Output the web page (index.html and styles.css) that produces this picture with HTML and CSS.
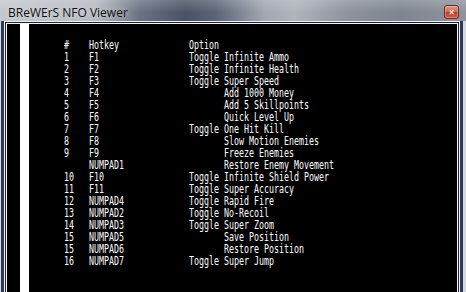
FILE: index.html
```html
<!DOCTYPE html>
<html lang="en">
<head>
    <meta charset="UTF-8">
    <title>BReWErS NFO Viewer</title>
    <link rel="stylesheet" href="styles.css">
</head>
<body>
    <div class="window">
        <div class="titlebar">
            <span class="title">BReWErS NFO Viewer</span>
            <span class="close-btn">&#x2715;</span>
        </div>
        <div class="body">
            <div class="frame">
                <div class="client">
                    <div class="gutter"></div>
                    <div class="strip"></div>
                    <div class="nfo">
<pre class="nfo-text">#    Hotkey              Option
1    F1                  Toggle Infinite Ammo
2    F2                  Toggle Infinite Health
3    F3                  Toggle Super Speed
4    F4                         Add 1000 Money
5    F5                         Add 5 Skillpoints
6    F6                         Quick Level Up
7    F7                  Toggle One Hit Kill
8    F8                         Slow Motion Enemies
9    F9                         Freeze Enemies
     NUMPAD1                    Restore Enemy Movement
10   F10                 Toggle Infinite Shield Power
11   F11                 Toggle Super Accuracy
12   NUMPAD4             Toggle Rapid Fire
13   NUMPAD2             Toggle No-Recoil
14   NUMPAD3             Toggle Super Zoom
15   NUMPAD5                    Save Position
15   NUMPAD6                    Restore Position
16   NUMPAD7             Toggle Super Jump</pre>
                    </div>
                </div>
            </div>
        </div>
    </div>
</body>
</html>
```

FILE: styles.css
```css
body {
    margin: 0;
    padding: 0;
    background-color: #d4d8de;
    overflow: hidden;
}
.window {
    display: flex;
    flex-direction: column;
    width: 466px;
    height: 292px;
}
.titlebar {
    height: 21px;
    display: flex;
    align-items: flex-start;
    justify-content: space-between;
    padding: 0 8px 0 8px;
    background:
        linear-gradient(180deg, rgba(255,255,255,0.18) 0, rgba(255,255,255,0) 60%),
        linear-gradient(90deg, #c4c8ce 0, #b6bbc3 95px, #6a7282 140px, #4a5363 185px, #5b6474 215px, #a3a8b1 265px, #b0b4bb 295px, #8c919b 350px, #7f8590 400px, #8f949d 466px);
}
.title {
    font-family: "Open Sans", "Noto Sans", sans-serif;
    font-size: 12px;
    line-height: 16px;
    color: #111;
    text-shadow: 0 0 6px rgba(255,255,255,0.6);
    padding-top: 5px;
}
.close-btn {
    width: 15px;
    height: 14px;
    margin-top: 5px;
    margin-right: -1px;
    box-sizing: border-box;
    display: flex;
    align-items: center;
    justify-content: center;
    font-family: "DejaVu Sans", sans-serif;
    font-size: 8px;
    font-weight: bold;
    color: #fff;
    border: 1px solid #6e2a22;
    border-radius: 3px;
    background: linear-gradient(180deg, #e49a88 0, #d06a56 45%, #b8402c 55%, #c8604a 100%);
    box-shadow: inset 0 0 0 1px rgba(255,220,210,0.35);
}
.body {
    flex: 1;
    display: flex;
    padding: 0 3px 0 1px;
    background-color: #d4d8de;
}
.frame {
    flex: 1;
    display: flex;
    padding: 2px 5px 0 5px;
    background-color: #2e3b55;
}
.client {
    flex: 1;
    display: flex;
    background-color: #000;
    border: 1px solid #f4f6f8;
    border-bottom: none;
    box-shadow: 0 0 0 1px #1c2230, 0 0 0 2px #eef0f3;
}
.gutter {
    width: 13px;
}
.strip {
    width: 9px;
    background-color: #fff;
}
.nfo {
    flex: 1;
    padding: 15px 0 0 35px;
    overflow: hidden;
}
.nfo-text {
    margin: 0;
    font-family: "DejaVu Sans Mono", monospace;
    font-size: 12px;
    line-height: 12px;
    color: #fff;
    transform: scaleX(0.692);
    transform-origin: left top;
}
```
